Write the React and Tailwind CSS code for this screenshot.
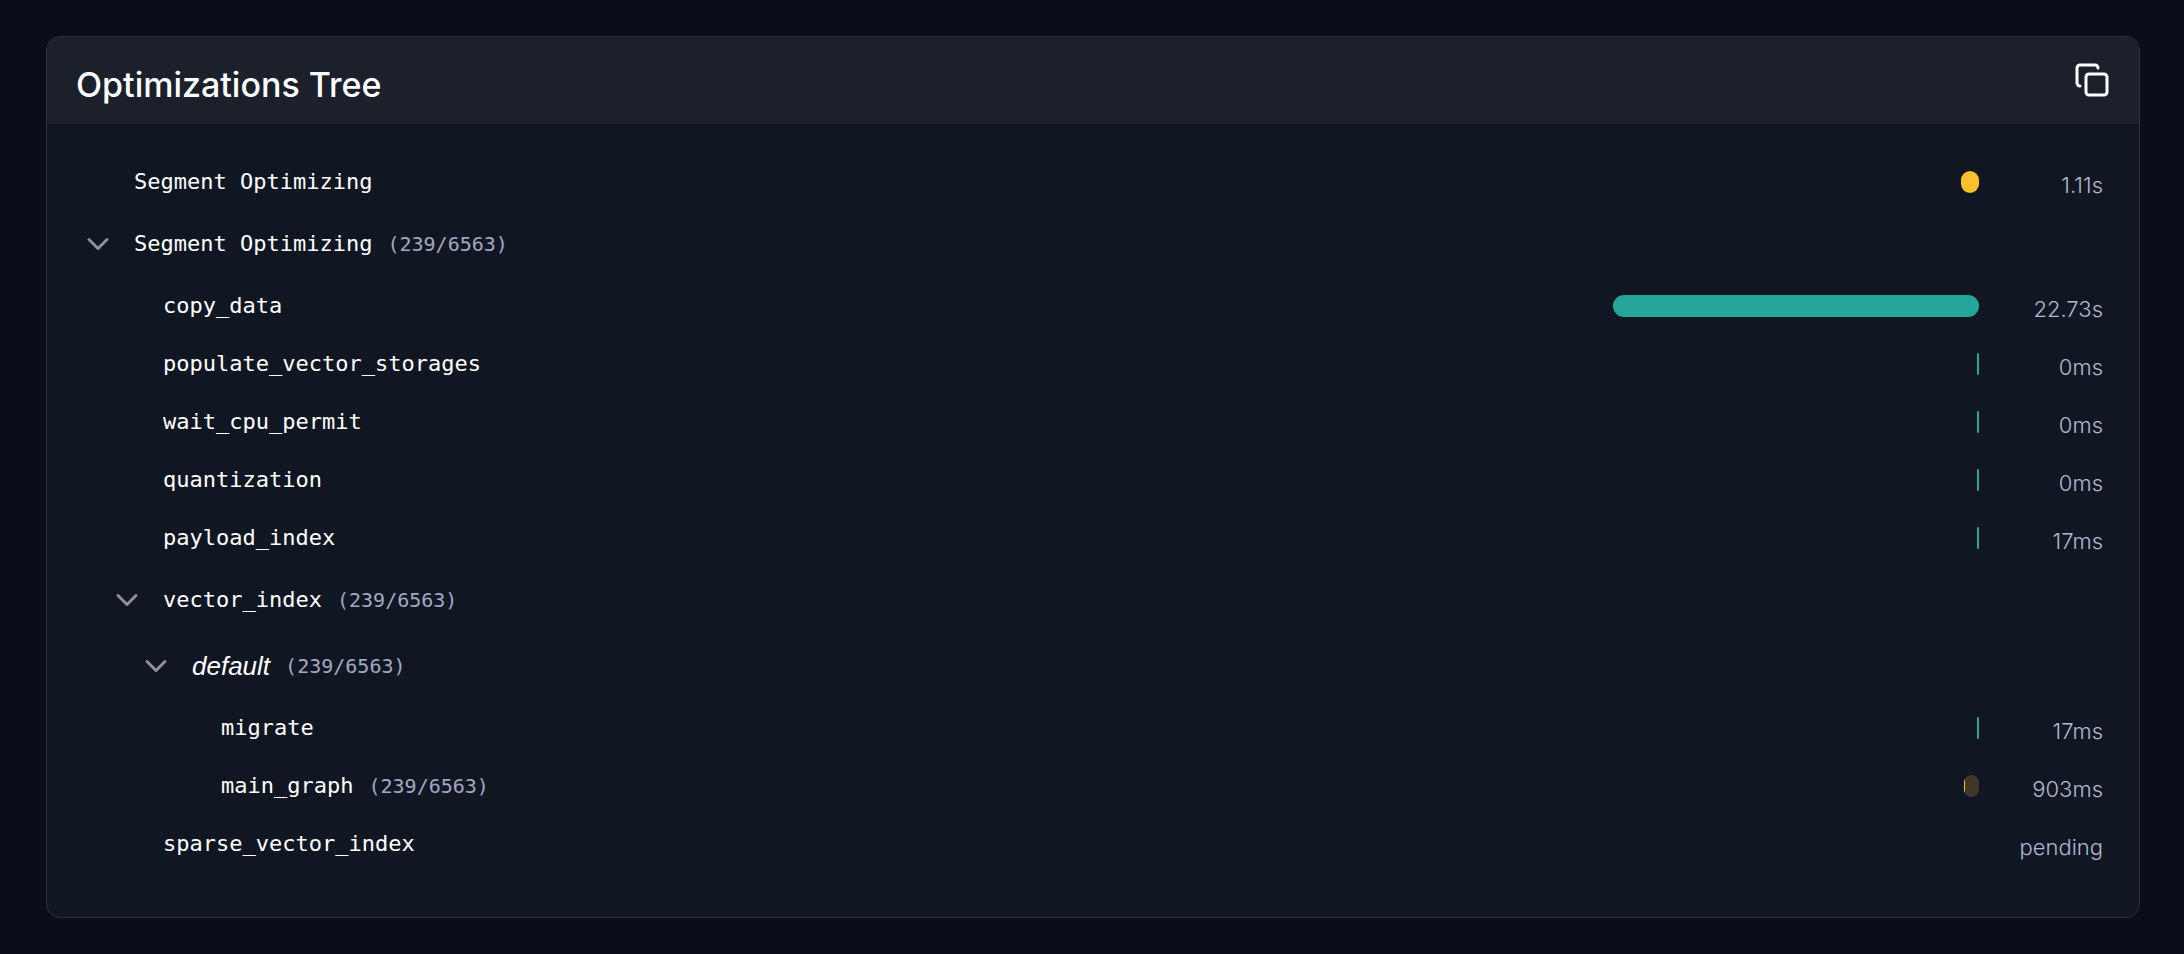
import { useState } from 'react';
import { ChevronDown, Copy } from 'lucide-react';

// Length of the time axis, in seconds.
const SPAN = 25.1;

const TREE = [
  { id: 'current', name: 'Segment Optimizing', seconds: 1.11, time: '1.11s', tone: 'running' },
  {
    id: 'previous',
    name: 'Segment Optimizing',
    count: [239, 6563],
    children: [
      { id: 'copy', name: 'copy_data', seconds: 22.73, time: '22.73s' },
      { id: 'populate', name: 'populate_vector_storages', seconds: 0, time: '0ms' },
      { id: 'wait', name: 'wait_cpu_permit', seconds: 0, time: '0ms' },
      { id: 'quantization', name: 'quantization', seconds: 0, time: '0ms' },
      { id: 'payload', name: 'payload_index', seconds: 0.017, time: '17ms' },
      {
        id: 'vector',
        name: 'vector_index',
        count: [239, 6563],
        children: [
          {
            id: 'default',
            name: 'default',
            italic: true,
            count: [239, 6563],
            children: [
              { id: 'migrate', name: 'migrate', seconds: 0.017, time: '17ms' },
              { id: 'graph', name: 'main_graph', count: [239, 6563], seconds: 0.903, time: '903ms', tone: 'partial' },
            ],
          },
        ],
      },
      { id: 'sparse', name: 'sparse_vector_index', time: 'pending' },
    ],
  },
];

const TONES = {
  done: 'bg-[#26a69a]',
  running: 'bg-[#fbc02d]',
  partial: 'bg-[#403826]',
};

const INDENTS = ['pl-0', 'pl-[29px]', 'pl-[58px]', 'pl-[87px]'];

function Bar({ node }) {
  return (
    <div
      className={`flex h-[22px] min-w-[2px] overflow-hidden rounded-xl ${TONES[node.tone ?? 'done']}`}
      style={{ width: `${(node.seconds / SPAN) * 100}%` }}
    >
      {node.tone === 'partial' && (
        <div
          className="h-full min-w-px bg-[#fbc02d]"
          style={{ width: `${(node.count[0] / node.count[1]) * 100}%` }}
        />
      )}
    </div>
  );
}

function Label({ node }) {
  return (
    <span className="flex items-center gap-[15px]">
      {node.italic ? (
        <em className="font-['Liberation_Sans',sans-serif] text-[26px] leading-8 text-white">{node.name}</em>
      ) : (
        <span className="text-[22px] leading-8 text-white">{node.name}</span>
      )}
      {node.count && (
        <span className="text-[20px] leading-8 text-[#a3a8c2]">
          ({node.count[0]}/{node.count[1]})
        </span>
      )}
    </span>
  );
}

function Node({ node, depth }) {
  const [open, setOpen] = useState(true);
  const indent = INDENTS[depth];

  if (node.children) {
    return (
      <li>
        <div className={`flex h-[66px] items-center ${indent}`}>
          <button
            type="button"
            aria-expanded={open}
            onClick={() => setOpen(!open)}
            className="flex cursor-pointer items-center gap-[18px]"
          >
            <ChevronDown size={36} className={open ? 'text-[#8e9299]' : '-rotate-90 text-[#8e9299]'} />
            <Label node={node} />
          </button>
        </div>
        {open && (
          <ul>
            {node.children.map((child) => (
              <Node key={child.id} node={child} depth={depth + 1} />
            ))}
          </ul>
        )}
      </li>
    );
  }

  return (
    <li className="flex h-[58px] items-center">
      <div className={`flex-1 ${indent}`}>
        <div className="pl-[54px]">
          <Label node={node} />
        </div>
      </div>
      <div className="flex w-1/5 justify-end">{node.seconds !== undefined && <Bar node={node} />}</div>
      <div className="w-[124px] pt-1.5 text-right font-[Inter,sans-serif] text-[22px] leading-8 font-light text-[#b2b7d2]">
        {node.time}
      </div>
    </li>
  );
}

export default function App() {
  return (
    <main className="min-h-screen bg-[#0a0e18] py-9 pr-11 pl-[46px]">
      <section className="overflow-hidden rounded-[14px] border border-[#2c313c] bg-[#111722]">
        <header className="flex h-[87px] items-center justify-between bg-[#1b202b] px-[29px] pb-0.5">
          <h1 className="pt-2.5 font-[Inter,sans-serif] text-[34px] leading-10 font-medium text-white">
            Optimizations Tree
          </h1>
          <button type="button" aria-label="Copy" className="cursor-pointer text-white">
            <Copy size={36} />
          </button>
        </header>
        <ul className="pt-[29px] pr-9 pb-11 pl-[33px] font-['DejaVu_Sans_Mono',monospace]">
          {TREE.map((node) => (
            <Node key={node.id} node={node} depth={0} />
          ))}
        </ul>
      </section>
    </main>
  );
}
